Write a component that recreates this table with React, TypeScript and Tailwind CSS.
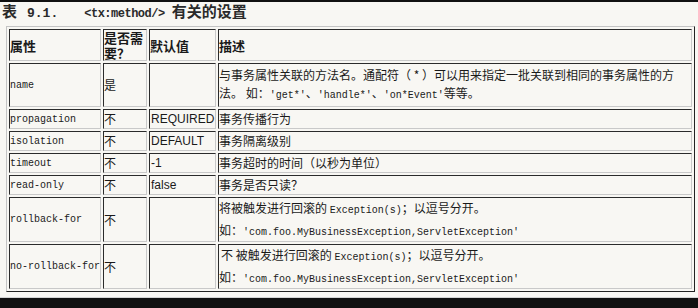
import React from 'react';

const cjk = "font-['Noto_Sans_CJK_SC','Noto_Sans',sans-serif]";
const mono = "font-['Liberation_Mono','Noto_Sans_CJK_SC',monospace]";
const sans = "font-['Liberation_Sans','Noto_Sans_CJK_SC',sans-serif]";

const cell =
  'flex items-center min-w-0 overflow-hidden border border-t-[#2b2b2b] border-l-[#2b2b2b] border-r-[#c9c9c9] border-b-[#c9c9c9] text-[#1a1a1a]';

function Code({ children }: { children: React.ReactNode }) {
  return <span className={`${mono} text-[10px]`}>{children}</span>;
}

type Row = {
  name: string;
  required: string;
  def: string;
  desc: React.ReactNode;
};

const rows: Row[] = [
  {
    name: 'name',
    required: '是',
    def: '',
    desc: (
      <div className="leading-[18px]">
        <div className="whitespace-nowrap">与事务属性关联的方法名。通配符（ * ）可以用来指定一批关联到相同的事务属性的方</div>
        <div className="whitespace-nowrap">
          法。 如：<Code>'get*'</Code>、<Code>'handle*'</Code>、<Code>'on*Event'</Code>等等。
        </div>
      </div>
    ),
  },
  { name: 'propagation', required: '不', def: 'REQUIRED', desc: '事务传播行为' },
  { name: 'isolation', required: '不', def: 'DEFAULT', desc: '事务隔离级别' },
  { name: 'timeout', required: '不', def: '-1', desc: '事务超时的时间（以秒为单位）' },
  { name: 'read-only', required: '不', def: 'false', desc: '事务是否只读？' },
  {
    name: 'rollback-for',
    required: '不',
    def: '',
    desc: (
      <div className="leading-[19px]">
        <div className="whitespace-nowrap">
          将被触发进行回滚的 <Code>Exception(s)</Code>；以逗号分开。
        </div>
        <div className="whitespace-nowrap">
          如：<Code>'com.foo.MyBusinessException,ServletException'</Code>
        </div>
      </div>
    ),
  },
  {
    name: 'no-rollback-for',
    required: '不',
    def: '',
    desc: (
      <div className="leading-[19px]">
        <div className="whitespace-nowrap pl-[2px]">
          不 被触发进行回滚的 <Code>Exception(s)</Code>；以逗号分开。
        </div>
        <div className="whitespace-nowrap">
          如：<Code>'com.foo.MyBusinessException,ServletException'</Code>
        </div>
      </div>
    ),
  },
];

export default function App() {
  return (
    <div className={`w-[698px] h-[308px] overflow-hidden bg-[#f8f7f3] flex flex-col ${cjk}`}>
      <div className="h-[2px] bg-[#111]" />
      <div className="h-[24px] flex items-baseline pl-[2px] pt-[1px] text-[15px] font-bold leading-[16px] text-[#2a2a2a] whitespace-nowrap">
        <span>表</span>
        <span className={`${mono} ml-[10px] text-[13px]`}>9.1.</span>
        <span className={`${mono} ml-[26px] text-[12px] tracking-[-0.5px]`}>&lt;tx:method/&gt;</span>
        <span className="ml-[7px]">有关的设置</span>
      </div>

      <div className="ml-[6px] w-[689px] box-border border border-t-[#c4c4c4] border-l-[#c4c4c4] border-r-[#222] border-b-[#222] p-[2px] grid gap-[2px] grid-cols-[92px_44px_67px_474px] grid-rows-[32px_44px_20px_20px_20px_20px_45px_45px]">
        <div className={`${cell} text-[13px] font-bold leading-[15px]`}>属性</div>
        <div className={`${cell} text-[13px] font-bold leading-[15px]`}>是否需要？</div>
        <div className={`${cell} text-[13px] font-bold leading-[15px]`}>默认值</div>
        <div className={`${cell} text-[13px] font-bold leading-[15px]`}>描述</div>

        {rows.map(row => (
          <React.Fragment key={row.name}>
            <div className={`${cell} ${mono} text-[10px] whitespace-nowrap`}>{row.name}</div>
            <div className={`${cell} text-[12px]`}>{row.required}</div>
            <div className={`${cell} ${sans} text-[12px] pl-[1px]`}>{row.def}</div>
            <div className={`${cell} text-[12px]`}>{row.desc}</div>
          </React.Fragment>
        ))}
      </div>

      <div className="mt-[5px] h-[1px] bg-[#d4d4d4]" />
      <div className="flex-1 bg-[#111]" />
    </div>
  );
}
